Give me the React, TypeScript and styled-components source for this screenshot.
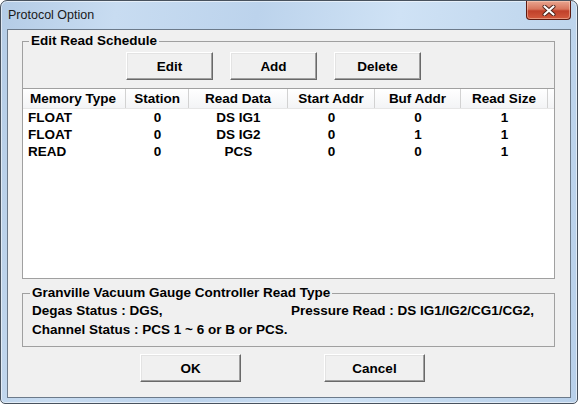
import React from 'react';
import styled, { createGlobalStyle } from 'styled-components';

const GlobalStyle = createGlobalStyle`
  html, body {
    margin: 0;
    padding: 0;
    background: #ffffff;
  }
  body {
    font-family: "Liberation Sans", Arial, sans-serif;
  }
`;

const Window = styled.div`
  box-sizing: border-box;
  width: 578px;
  height: 404px;
  border: 1px solid #48525e;
  border-radius: 7px 7px 5px 5px;
  padding: 0 6px 5px 6px;
  display: flex;
  flex-direction: column;
  background: linear-gradient(
    100deg,
    #b4cce6 0%,
    #c8dcf1 18%,
    #bcd3ec 40%,
    #cfe2f5 62%,
    #c3d9ef 80%,
    #b8d0ea 100%
  );
  box-shadow: inset 0 0 0 1px rgba(255, 255, 255, 0.55);
`;

const TitleBar = styled.div`
  height: 28px;
  display: flex;
  align-items: flex-start;
  justify-content: space-between;
`;

const Title = styled.div`
  padding-left: 1px;
  line-height: 28px;
  font-size: 12.5px;
  color: #1a1a1a;
`;

const CloseButton = styled.div`
  box-sizing: border-box;
  width: 45px;
  height: 19px;
  margin-right: 0;
  display: flex;
  align-items: center;
  justify-content: center;
  border: 1px solid #5e1a10;
  border-top: none;
  border-radius: 0 0 4px 4px;
  background: linear-gradient(#e9a590 0%, #d8765d 45%, #c0402a 55%, #d35a3e 100%);
  box-shadow: inset 0 0 0 1px rgba(255, 220, 200, 0.45);
`;

const Client = styled.div`
  box-sizing: border-box;
  flex: 1;
  border: 1px solid #6c7a8a;
  background: #f0f0f0;
  display: flex;
  flex-direction: column;
`;

const GroupBox = styled.fieldset<{ $top: number }>`
  box-sizing: border-box;
  width: 533px;
  margin: ${({ $top }) => $top}px 0 0 14px;
  padding: 0;
  border: 1px solid #a0a0a0;
  min-width: 0;
`;

const Legend = styled.legend<{ $left: number }>`
  margin-left: ${({ $left }) => $left}px;
  padding: 0 2px;
  line-height: 16px;
  font-size: 13.5px;
  font-weight: bold;
  color: #000;
`;

const ButtonRow = styled.div`
  display: flex;
  gap: 17px;
  padding: 3px 0 0 103px;
`;

const Button = styled.button<{ $width: number }>`
  box-sizing: border-box;
  width: ${({ $width }) => $width}px;
  height: 28px;
  padding: 0;
  border: 1px solid;
  border-color: #ffffff #696969 #696969 #ffffff;
  box-shadow: inset -1px -1px 0 #a0a0a0, inset 1px 1px 0 #e3e3e3;
  background: #f0f0f0;
  font-family: "Liberation Sans", Arial, sans-serif;
  font-size: 13.5px;
  font-weight: bold;
  color: #000;
`;

const List = styled.div`
  box-sizing: border-box;
  height: 190px;
  margin-top: 8px;
  border-top: 1px solid #a0a0a0;
  background: #ffffff;
`;

const columns = '103px 63px 99px 87px 86px 87px 1fr';

const HeaderRow = styled.div`
  display: grid;
  grid-template-columns: ${columns};
  height: 20px;
  background: linear-gradient(#ffffff, #f3f4f6);
  border-bottom: 1px solid #e6e6e6;
  box-sizing: border-box;
`;

const HeaderCell = styled.div<{ $left?: boolean }>`
  border-right: 1px solid #d2d2d2;
  line-height: 19px;
  font-size: 13.5px;
  font-weight: bold;
  text-align: ${({ $left }) => ($left ? 'left' : 'center')};
  padding-left: ${({ $left }) => ($left ? '7px' : '0')};
  white-space: nowrap;
`;

const HeaderFill = styled.div``;

const Row = styled.div`
  display: grid;
  grid-template-columns: ${columns};
  height: 17px;
  line-height: 17px;
  font-size: 13.5px;
  font-weight: bold;
`;

const Cell = styled.div<{ $left?: boolean }>`
  text-align: ${({ $left }) => ($left ? 'left' : 'center')};
  padding-left: ${({ $left }) => ($left ? '5px' : '0')};
  white-space: nowrap;
`;

const InfoGrid = styled.div`
  display: grid;
  grid-template-columns: 259px 1fr;
  padding: 0 0 7px 9px;
  line-height: 19px;
  font-size: 13.5px;
  font-weight: bold;
  white-space: nowrap;
`;

const Footer = styled.div`
  display: flex;
  gap: 83px;
  margin-top: 7px;
  padding-left: 132px;
`;

const headers = ['Memory Type', 'Station', 'Read Data', 'Start Addr', 'Buf Addr', 'Read Size'];

const rows = [
  ['FLOAT', '0', 'DS IG1', '0', '0', '1'],
  ['FLOAT', '0', 'DS IG2', '0', '1', '1'],
  ['READ', '0', 'PCS', '0', '0', '1'],
];

const CloseIcon = () => (
  <svg width="14" height="11" viewBox="0 0 14 11">
    <path d="M2.5 1.5 L11.5 9.5 M11.5 1.5 L2.5 9.5" stroke="#4a2018" strokeWidth="4" strokeLinecap="round" />
    <path d="M2.5 1.5 L11.5 9.5 M11.5 1.5 L2.5 9.5" stroke="#ffffff" strokeWidth="2.2" strokeLinecap="round" />
  </svg>
);

const App: React.FC = () => {
  return (
    <>
      <GlobalStyle />
      <Window>
        <TitleBar>
          <Title>Protocol Option</Title>
          <CloseButton>
            <CloseIcon />
          </CloseButton>
        </TitleBar>
        <Client>
          <GroupBox $top={3}>
            <Legend $left={6}>Edit Read Schedule</Legend>
            <ButtonRow>
              <Button $width={87}>Edit</Button>
              <Button $width={87}>Add</Button>
              <Button $width={87}>Delete</Button>
            </ButtonRow>
            <List>
              <HeaderRow>
                {headers.map((h, i) => (
                  <HeaderCell key={h} $left={i === 0}>{h}</HeaderCell>
                ))}
                <HeaderFill />
              </HeaderRow>
              {rows.map((r, ri) => (
                <Row key={ri}>
                  {r.map((c, ci) => (
                    <Cell key={ci} $left={ci === 0}>{c}</Cell>
                  ))}
                </Row>
              ))}
            </List>
          </GroupBox>
          <GroupBox $top={6}>
            <Legend $left={7}>Granville Vacuum Gauge Controller Read Type</Legend>
            <InfoGrid>
              <span>Degas Status : DGS,</span>
              <span>Pressure Read : DS IG1/IG2/CG1/CG2,</span>
              <span>Channel Status : PCS 1 ~ 6 or B or PCS.</span>
            </InfoGrid>
          </GroupBox>
          <Footer>
            <Button $width={101}>OK</Button>
            <Button $width={101}>Cancel</Button>
          </Footer>
        </Client>
      </Window>
    </>
  );
};

export default App;
